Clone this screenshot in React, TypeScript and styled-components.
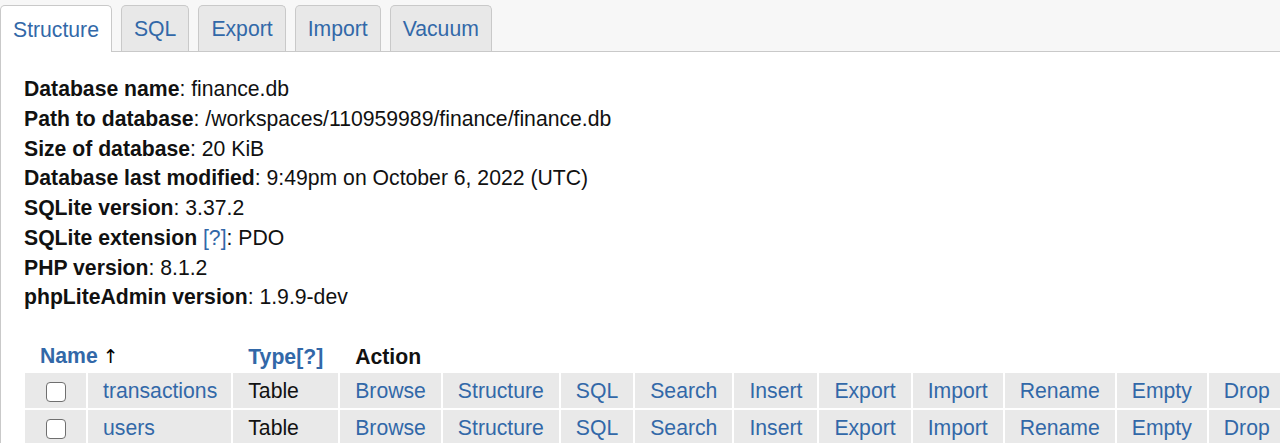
import React from "react";
import styled, { createGlobalStyle } from "styled-components";

const Global = createGlobalStyle`
  html, body {
    margin: 0;
    padding: 0;
    background: #ffffff;
    overflow: hidden;
  }
  body {
    font-family: "Liberation Sans", Arial, Helvetica, sans-serif;
    font-size: 21.2px;
    color: #111;
  }
`;

const BLUE = "#3268a8";

const Page = styled.div`
  width: 1280px;
  height: 443px;
  overflow: hidden;
`;

const TabBar = styled.nav`
  display: flex;
  align-items: flex-end;
  gap: 9px;
  height: 46px;
  padding-top: 5px;
  background: #f7f7f7;
  border-bottom: 1px solid #c9c9c9;
`;

const Tab = styled.a<{ $active?: boolean }>`
  display: flex;
  align-items: center;
  box-sizing: border-box;
  height: ${(p) => (p.$active ? "47px" : "46px")};
  margin-bottom: ${(p) => (p.$active ? "-1px" : "0")};
  padding: 1px 12px 0;
  border: 1px solid #c9c9c9;
  border-bottom: none;
  border-radius: 5px 5px 0 0;
  background: ${(p) => (p.$active ? "#ffffff" : "#e8e8e8")};
  color: ${BLUE};
  text-decoration: none;
  font-size: 21.2px;
  line-height: 24px;
`;

const Panel = styled.main`
  border-left: 1px solid #c9c9c9;
  background: #ffffff;
  padding: 22px 0 0 23px;
  height: 400px;
`;

const InfoList = styled.div`
  display: flex;
  flex-direction: column;
`;

const InfoLine = styled.div`
  line-height: 29.75px;
  white-space: nowrap;
`;

const Label = styled.b`
  font-weight: bold;
`;

const Help = styled.a<{ $bold?: boolean }>`
  color: ${BLUE};
  text-decoration: none;
  font-weight: ${(p) => (p.$bold ? "bold" : "normal")};
`;

const Table = styled.table`
  border-collapse: separate;
  border-spacing: 2px;
  margin: 27px 0 0 -1px;
  white-space: nowrap;
  width: max-content;
`;

const HeadCell = styled.th`
  text-align: left;
  font-weight: bold;
  padding: 0 15px;
  height: 29px;
  vertical-align: middle;
  line-height: 29px;
`;

const Arrow = styled.span`
  font-family: "DejaVu Sans", sans-serif;
  font-size: 19px;
  font-weight: normal;
  color: #000;
  margin-left: 5px;
`;

const Cell = styled.td<{ $wide?: boolean }>`
  background: #e9e9e9;
  padding: 0 ${(p) => (p.$wide ? "15px" : "14px")} 0 15px;
  height: 35px;
  vertical-align: middle;
  text-align: left;
  line-height: 24px;
`;

const CheckCell = styled(Cell)`
  width: 32px;
  min-width: 32px;
  padding: 0 14px 0 15px;
`;

const Box = styled.input`
  appearance: none;
  -webkit-appearance: none;
  display: block;
  margin: 2px auto 0;
  width: 20px;
  height: 20px;
  box-sizing: border-box;
  border: 1.5px solid #6f6f6f;
  border-radius: 4px;
  background: #fff;
`;

const Link = styled.a`
  color: ${BLUE};
  text-decoration: none;
`;

const tabs = ["Structure", "SQL", "Export", "Import", "Vacuum"];
const actions = [
  "Browse",
  "Structure",
  "SQL",
  "Search",
  "Insert",
  "Export",
  "Import",
  "Rename",
  "Empty",
  "Drop",
];
const tables = ["transactions", "users"];

export default function App() {
  return (
    <Page>
      <Global />
      <TabBar>
        {tabs.map((t, i) => (
          <Tab key={t} $active={i === 0} href="#">
            {t}
          </Tab>
        ))}
      </TabBar>
      <Panel>
        <InfoList>
          <InfoLine>
            <Label>Database name</Label>: finance.db
          </InfoLine>
          <InfoLine>
            <Label>Path to database</Label>: /workspaces/110959989/finance/finance.db
          </InfoLine>
          <InfoLine>
            <Label>Size of database</Label>: 20 KiB
          </InfoLine>
          <InfoLine>
            <Label>Database last modified</Label>: 9:49pm on October 6, 2022 (UTC)
          </InfoLine>
          <InfoLine>
            <Label>SQLite version</Label>: 3.37.2
          </InfoLine>
          <InfoLine>
            <Label>SQLite extension</Label> <Help href="#">[?]</Help>: PDO
          </InfoLine>
          <InfoLine>
            <Label>PHP version</Label>: 8.1.2
          </InfoLine>
          <InfoLine>
            <Label>phpLiteAdmin version</Label>: 1.9.9-dev
          </InfoLine>
        </InfoList>
        <Table>
          <thead>
            <tr>
              <HeadCell colSpan={2}>
                <Help $bold href="#">
                  Name
                </Help>
                <Arrow>↑</Arrow>
              </HeadCell>
              <HeadCell>
                <Help $bold href="#">
                  Type
                </Help>
                <Help $bold href="#">
                  [?]
                </Help>
              </HeadCell>
              <HeadCell colSpan={10}>Action</HeadCell>
            </tr>
          </thead>
          <tbody>
            {tables.map((name) => (
              <tr key={name}>
                <CheckCell>
                  <Box type="checkbox" />
                </CheckCell>
                <Cell>
                  <Link href="#">{name}</Link>
                </Cell>
                <Cell>Table</Cell>
                {actions.map((a) => (
                  <Cell key={a} $wide>
                    <Link href="#">{a}</Link>
                  </Cell>
                ))}
              </tr>
            ))}
          </tbody>
        </Table>
      </Panel>
    </Page>
  );
}
